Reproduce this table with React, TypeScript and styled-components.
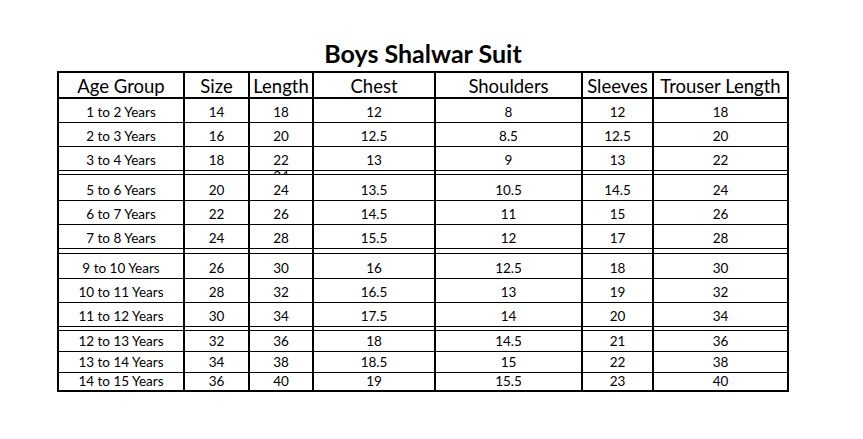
import styled, { createGlobalStyle } from 'styled-components'

const GlobalStyle = createGlobalStyle`
  html, body {
    margin: 0;
    padding: 0;
    background: #fff;
  }
  body {
    font-family: Lato, 'Liberation Sans', sans-serif;
    color: #000;
  }
`

const COLS = '126px 65px 64px 122px 147px 71px 133px'

const Page = styled.div`
  width: 863px;
  height: 439px;
  padding: 41px 0 0 57px;
  box-sizing: border-box;
`

const Sheet = styled.div`
  width: 732px;
`

const Title = styled.div`
  font-size: 25px;
  line-height: 25px;
  font-weight: 700;
  text-align: center;
  margin-bottom: 5px;
`

const Table = styled.div`
  border: 2px solid #000;
  box-sizing: border-box;
  width: 732px;
`

const Row = styled.div<{ $h: number; $head?: boolean; $last?: boolean }>`
  display: grid;
  grid-template-columns: ${COLS};
  height: ${({ $h }) => $h}px;
  box-sizing: border-box;
  border-bottom: ${({ $head, $last }) => ($last ? '0' : $head ? '2px' : '1px')} solid #000;
`

const Cell = styled.div<{ $head?: boolean; $pad?: number }>`
  display: flex;
  align-items: flex-end;
  justify-content: center;
  overflow: hidden;
  white-space: nowrap;
  border-right: 2px solid #000;
  box-sizing: border-box;
  font-size: ${({ $head }) => ($head ? '18.5px' : '13.5px')};
  line-height: 1;
  padding-bottom: ${({ $pad }) => $pad ?? 3}px;
  &:last-child {
    border-right: 0;
  }
`

// hidden spreadsheet row whose value peeks out under the row above
const Ghost = styled.span`
  display: block;
  transform: translateY(9px);
`

const headers = ['Age Group', 'Size', 'Length', 'Chest', 'Shoulders', 'Sleeves', 'Trouser Length']

type Line = { age?: string; v?: (string | number)[]; h: number; gap?: boolean }

const rows: Line[] = [
  { age: '1 to 2 Years', v: [14, 18, 12, 8, 12, 18], h: 24 },
  { age: '2 to 3 Years', v: [16, 20, '12.5', '8.5', '12.5', 20], h: 24 },
  { age: '3 to 4 Years', v: [18, 22, 13, 9, 13, 22], h: 24 },
  { gap: true, h: 4 },
  { age: '5 to 6 Years', v: [20, 24, '13.5', '10.5', '14.5', 24], h: 26 },
  { age: '6 to 7 Years', v: [22, 26, '14.5', 11, 15, 26], h: 24 },
  { age: '7 to 8 Years', v: [24, 28, '15.5', 12, 17, 28], h: 24 },
  { gap: true, h: 5 },
  { age: '9 to 10 Years', v: [26, 30, 16, '12.5', 18, 30], h: 25 },
  { age: '10 to 11 Years', v: [28, 32, '16.5', 13, 19, 32], h: 24 },
  { age: '11 to 12 Years', v: [30, 34, '17.5', 14, 20, 34], h: 24 },
  { gap: true, h: 4 },
  { age: '12 to 13 Years', v: [32, 36, 18, '14.5', 21, 36], h: 21 },
  { age: '13 to 14 Years', v: [34, 38, '18.5', 15, 22, 38], h: 21 },
  { age: '14 to 15 Years', v: [36, 40, 19, '15.5', 23, 40], h: 17 },
]

export default function App() {
  return (
    <Page>
      <GlobalStyle />
      <Sheet>
        <Title>Boys Shalwar Suit</Title>
        <Table>
          <Row $h={26} $head>
            {headers.map((h) => (
              <Cell key={h} $head $pad={2}>
                {h}
              </Cell>
            ))}
          </Row>
          {rows.map((r, i) =>
            r.gap ? (
              <Row key={i} $h={r.h}>
                {headers.map((h, j) => (
                  <Cell key={h} $pad={0}>
                    {i === 3 && j === 2 ? <Ghost>24</Ghost> : null}
                  </Cell>
                ))}
              </Row>
            ) : (
              <Row key={i} $h={r.h} $last={i === rows.length - 1}>
                <Cell $pad={r.h < 20 ? 2 : 3}>{r.age}</Cell>
                {r.v!.map((v, j) => (
                  <Cell key={j} $pad={r.h < 20 ? 2 : 3}>
                    {v}
                  </Cell>
                ))}
              </Row>
            )
          )}
        </Table>
      </Sheet>
    </Page>
  )
}
